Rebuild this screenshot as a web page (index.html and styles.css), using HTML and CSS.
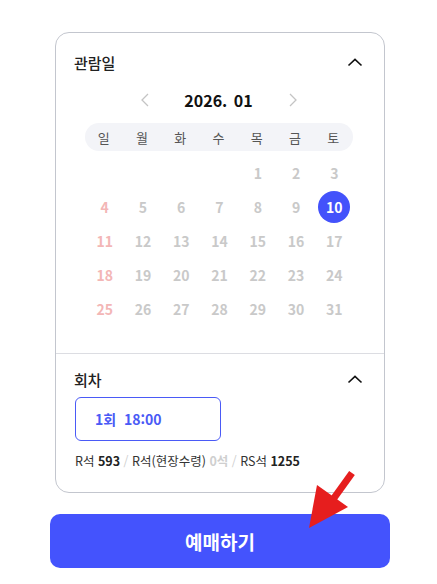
FILE: index.html
```html
<!DOCTYPE html>
<html lang="ko">
<head>
<meta charset="utf-8">
<link rel="stylesheet" href="styles.css">
</head>
<body>
<div class="wrap">
  <div class="card">
    <section class="sec sec-date">
      <div class="sec-head">
        <span class="sec-title">관람일</span>
        <svg class="chev" width="16" height="9" viewBox="0 0 16 9"><path d="M1.5 7.5 L8 1.4 L14.5 7.5" fill="none" stroke="#111" stroke-width="1.6"/></svg>
      </div>
      <div class="month-nav">
        <svg class="nav-arr" width="8" height="14" viewBox="0 0 8 14"><path d="M7 1 L1 7 L7 13" fill="none" stroke="#c4c4c4" stroke-width="1.3"/></svg>
        <span class="month">2026.&nbsp;01</span>
        <svg class="nav-arr" width="8" height="14" viewBox="0 0 8 14"><path d="M1 1 L7 7 L1 13" fill="none" stroke="#c4c4c4" stroke-width="1.3"/></svg>
      </div>
      <div class="weekdays">
        <span>일</span><span>월</span><span>화</span><span>수</span><span>목</span><span>금</span><span>토</span>
      </div>
      <div class="days">
        <span></span><span></span><span></span><span></span><span>1</span><span>2</span><span>3</span>
        <span class="sun">4</span><span>5</span><span>6</span><span>7</span><span>8</span><span>9</span><span class="sel"><b>10</b></span>
        <span class="sun">11</span><span>12</span><span>13</span><span>14</span><span>15</span><span>16</span><span>17</span>
        <span class="sun">18</span><span>19</span><span>20</span><span>21</span><span>22</span><span>23</span><span>24</span>
        <span class="sun">25</span><span>26</span><span>27</span><span>28</span><span>29</span><span>30</span><span>31</span>
      </div>
    </section>
    <section class="sec sec-time">
      <div class="sec-head">
        <span class="sec-title">회차</span>
        <svg class="chev" width="16" height="9" viewBox="0 0 16 9"><path d="M1.5 7.5 L8 1.4 L14.5 7.5" fill="none" stroke="#111" stroke-width="1.6"/></svg>
      </div>
      <button class="session">1회&nbsp; 18:00</button>
      <p class="seats">R석 <b>593</b> <i>/</i> R석(현장수령) <b class="zero">0석</b> <i>/</i> RS석 <b>1255</b></p>
    </section>
  </div>
  <button class="book">예매하기</button>
  <svg class="arrow" width="60" height="70" viewBox="0 0 60 70"><path d="M47 5 L24 37" stroke="#e61e1e" stroke-width="7" fill="none"/><polygon points="12,17 43,39 4,60" fill="#e61e1e"/></svg>
</div>
</body>
</html>
```
FILE: styles.css
```css
* { box-sizing: border-box; }
body {
  margin: 0;
  background: #fff;
  font-family: "Noto Sans CJK KR", "Noto Sans", sans-serif;
  color: #222;
}
.wrap {
  position: relative;
  width: 340px;
  margin: 32px 0 0 50px;
}
.card {
  margin: 0 5px;
  border: 1px solid #c3c6ce;
  border-radius: 14px;
  background: #fff;
}
.sec { padding: 17px 21px 0 18px; }
.sec-date { padding-bottom: 27px; border-bottom: 1px solid #dcdde2; }
.sec-time { padding-top: 13px; padding-bottom: 22px; }
.sec-head {
  display: flex;
  justify-content: space-between;
  align-items: center;
  height: 24px;
}
.sec-title { font-size: 15px; font-weight: 500; color: #222; }
.chev { display: block; }
.month-nav {
  display: flex;
  justify-content: center;
  align-items: center;
  gap: 32px;
  height: 24px;
  margin-top: 14px;
}
.month { font-size: 16px; font-weight: 700; color: #111; width: 76px; text-align: center; word-spacing: 2px; }
.nav-arr { display: block; }
.weekdays, .days {
  display: grid;
  grid-template-columns: repeat(7, 1fr);
  width: 268px;
  margin: 0 auto;
}
.weekdays {
  margin-top: 11px;
  height: 28px;
  background: #f3f4f8;
  border-radius: 14px;
  align-items: center;
  text-align: center;
  font-size: 13px;
  color: #555;
}
.days { margin-top: 5px; transform: translateX(1px); }
.days span {
  height: 34px;
  display: flex;
  align-items: center;
  justify-content: center;
  font-size: 14px;
  font-weight: 600;
  color: #c9c9c9;
}
.days .sun { color: #f3b6b6; }
.days .sel b {
  width: 32px;
  height: 32px;
  border-radius: 50%;
  background: #4352fb;
  color: #fff;
  font-weight: 700;
  display: flex;
  align-items: center;
  justify-content: center;
}
.session {
  display: block;
  margin-top: 6px;
  margin-left: 1px;
  width: 146px;
  height: 44px;
  border: 1px solid #4a5af6;
  border-radius: 6px;
  background: #fff;
  color: #4a5af6;
  font-family: inherit;
  font-size: 14px;
  font-weight: 600;
  text-align: left;
  padding: 0 0 0 19px;
}
.seats {
  margin: 11px 0 0 1px;
  font-size: 12.5px;
  line-height: 18px;
  color: #333;
}
.seats b { font-weight: 700; color: #222; }
.seats b.zero { color: #cfcfcf; }
.seats i { font-style: normal; color: #cfcfcf; }
.book {
  display: block;
  width: 340px;
  height: 54px;
  margin-top: 21px;
  border: 0;
  border-radius: 10px;
  background: #4453fd;
  color: #fff;
  font-family: inherit;
  font-size: 19px;
  font-weight: 700;
}
.arrow {
  position: absolute;
  left: 255px;
  top: 436px;
}
```
